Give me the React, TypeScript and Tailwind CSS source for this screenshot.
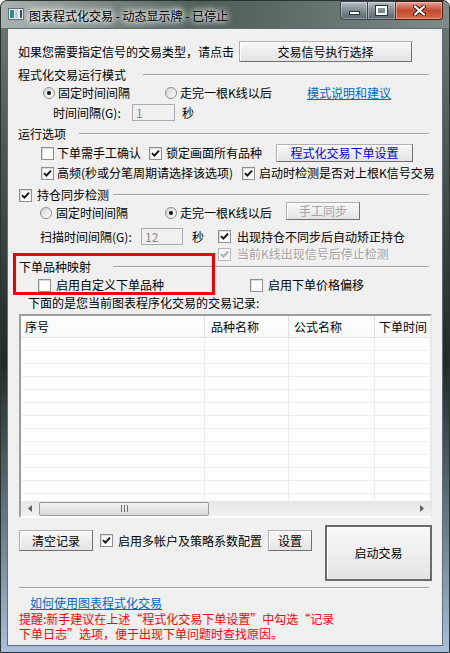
import React from 'react';

function Check({ checked = false, disabled = false }: { checked?: boolean; disabled?: boolean }) {
  return (
    <span
      className={
        disabled
          ? 'flex h-[13px] w-[13px] shrink-0 items-center justify-center border border-[#b8b8b8] bg-[#f4f4f4]'
          : 'flex h-[13px] w-[13px] shrink-0 items-center justify-center border border-[#8e8f8f] bg-white shadow-[inset_1px_1px_0_#dcdcdc]'
      }
    >
      {checked && (
        <svg width="9" height="9" viewBox="0 0 9 9">
          <path d="M1 4.2 3.4 6.6 8 1.6" fill="none" stroke={disabled ? '#a8a8a8' : '#111'} strokeWidth="1.9" />
        </svg>
      )}
    </span>
  );
}

function Radio({ on = false }: { on?: boolean }) {
  return (
    <span className="flex h-[12px] w-[12px] shrink-0 items-center justify-center rounded-full border border-[#8e8f8f] bg-gradient-to-br from-[#d4d4d4] to-white">
      {on && <span className="h-[4px] w-[4px] rounded-full bg-[#111]" />}
    </span>
  );
}

function Btn({
  children,
  className = '',
  disabled = false,
  strong = false,
}: {
  children: React.ReactNode;
  className?: string;
  disabled?: boolean;
  strong?: boolean;
}) {
  const edge = strong
    ? 'border-2 border-[#6a6a6a]'
    : 'border border-[#b0b0b0] border-r-[#707070] border-b-[#707070]';
  return (
    <div
      className={`flex shrink-0 items-center justify-center bg-gradient-to-b from-[#f8f8f8] to-[#e4e4e4] shadow-[inset_1px_1px_0_#fff] ${edge} ${disabled ? 'text-[#a3a3a3]' : ''} ${className}`}
    >
      {children}
    </div>
  );
}

const rows = Array.from({ length: 13 }, (_, i) => i);

export default function App() {
  return (
    <div className="flex h-[653px] w-[450px] flex-col overflow-hidden rounded-t-[7px] border border-[#2b3432] bg-gradient-to-b from-[#6f7b76] via-[#1f2b25] via-55% to-[#a8c0dc] font-['Noto_Sans_CJK_SC',sans-serif] text-[12px] leading-[14px] text-black">
      {/* title bar */}
      <div className="flex h-[27px] shrink-0 items-start bg-gradient-to-r from-[#aab3b0] via-[#4e5d56] via-45% to-[#7f8a89]">
        <svg className="ml-[7px] mt-[7px] shrink-0" width="16" height="12" viewBox="0 0 16 12">
          <rect x="0.5" y="0.5" width="15" height="11" fill="#e4edf6" stroke="#5e6e7c" />
          <rect x="2" y="2" width="4" height="8" fill="#2f8a86" />
          <rect x="7" y="2" width="3" height="8" fill="#b7cde3" />
          <rect x="12" y="2" width="2" height="8" fill="#3d4b58" />
        </svg>
        <span className="ml-[5px] mt-[7px] whitespace-nowrap leading-[16px] [text-shadow:0_0_5px_#fff,0_0_8px_#fff,0_0_10px_#fff]">
          图表程式化交易 - 动态显示牌 - 已停止
        </span>
        <div className="ml-auto mr-[6px] flex">
          <div className="flex h-[19px] w-[28px] items-center justify-center rounded-bl-[4px] border border-[#3a4347] bg-gradient-to-b from-[#b7c0c4] via-[#7f8b90] to-[#5b676c] shadow-[inset_0_0_0_1px_rgba(255,255,255,0.35)]">
            <span className="mt-[4px] h-[4px] w-[11px] border border-[#2e3538] bg-white" />
          </div>
          <div className="flex h-[19px] w-[28px] items-center justify-center border border-l-0 border-[#3a4347] bg-gradient-to-b from-[#b7c0c4] via-[#7f8b90] to-[#5b676c] shadow-[inset_0_0_0_1px_rgba(255,255,255,0.35)]">
            <span className="h-[9px] w-[11px] border-[2px] border-white outline outline-1 outline-[#2e3538]" />
          </div>
          <div className="flex h-[19px] w-[47px] items-center justify-center rounded-br-[4px] border border-l-0 border-[#4a1a10] bg-gradient-to-b from-[#e3a293] via-[#c24a30] to-[#d9684a] shadow-[inset_0_0_0_1px_rgba(255,255,255,0.35)]">
            <svg width="13" height="11" viewBox="0 0 13 11">
              <path d="M2 1.5 11 9.5 M11 1.5 2 9.5" stroke="#3a1a12" strokeWidth="4" strokeLinecap="round" />
              <path d="M2 1.5 11 9.5 M11 1.5 2 9.5" stroke="#fff" strokeWidth="2.2" strokeLinecap="round" />
            </svg>
          </div>
        </div>
      </div>

      {/* client area */}
      <div className="flex flex-1 px-[6px] pb-[6px]">
        <div className="relative flex flex-1 flex-col border border-[#5f6d78] bg-[#f0f0f0]">
          <div className="mt-[12px] flex h-[21px] items-center pl-[10px]">
            <span className="w-[221px] whitespace-nowrap">如果您需要指定信号的交易类型，请点击</span>
            <Btn className="h-[21px] w-[173px]">交易信号执行选择</Btn>
          </div>

          <div className="mt-[5px] flex h-[16px] items-center pl-[10px]">
            <span className="w-[125px] whitespace-nowrap">程式化交易运行模式</span>
            <div className="h-[2px] w-[286px] border-t border-b border-t-[#a0a0a0] border-b-white" />
          </div>

          <div className="mt-[2px] flex h-[16px] items-center pl-[35px]">
            <div className="flex w-[122px] items-center gap-[3px]">
              <Radio on />
              <span>固定时间间隔</span>
            </div>
            <div className="flex w-[142px] items-center gap-[3px]">
              <Radio />
              <span>走完一根K线以后</span>
            </div>
            <span className="text-[#0066cc] underline">模式说明和建议</span>
          </div>

          <div className="mt-[3px] flex h-[17px] items-center pl-[45px]">
            <span className="w-[79px] whitespace-nowrap">时间间隔(G):</span>
            <div className="flex h-[17px] w-[43px] items-center border border-[#a9abb0] bg-[#f0f0f0] pl-[3px] text-[#8a8a8a]">1</div>
            <span className="ml-[7px]">秒</span>
          </div>

          <div className="mt-[5px] flex h-[16px] items-center pl-[10px]">
            <span className="w-[61px] whitespace-nowrap">运行选项</span>
            <div className="h-[2px] w-[350px] border-t border-b border-t-[#a0a0a0] border-b-white" />
          </div>

          <div className="mt-[2px] flex h-[18px] items-center pl-[33px]">
            <div className="flex w-[108px] items-center gap-[3px]">
              <Check />
              <span className="whitespace-nowrap">下单需手工确认</span>
            </div>
            <div className="flex w-[127px] items-center gap-[4px]">
              <Check checked />
              <span className="whitespace-nowrap">锁定画面所有品种</span>
            </div>
            <Btn className="h-[18px] w-[137px] text-[#0000ee]">程式化交易下单设置</Btn>
          </div>

          <div className="mt-[3px] flex h-[16px] items-center pl-[33px]">
            <div className="flex w-[201px] items-center gap-[3px]">
              <Check checked />
              <span className="whitespace-nowrap">高频(秒或分笔周期请选择该选项)</span>
            </div>
            <div className="flex items-center gap-[4px]">
              <Check checked />
              <span className="whitespace-nowrap">启动时检测是否对上根K信号交易</span>
            </div>
          </div>

          <div className="mt-[7px] flex h-[14px] items-center pl-[11px]">
            <div className="flex w-[94px] items-center gap-[5px]">
              <Check checked />
              <span className="whitespace-nowrap">持仓同步检测</span>
            </div>
            <div className="h-[2px] w-[316px] border-t border-b border-t-[#a0a0a0] border-b-white" />
          </div>

          <div className="flex h-[18px] items-center pl-[32px]">
            <div className="flex w-[125px] items-center gap-[4px] pt-[3px]">
              <Radio />
              <span>固定时间间隔</span>
            </div>
            <div className="flex w-[121px] items-center gap-[3px] pt-[3px]">
              <Radio on />
              <span className="whitespace-nowrap">走完一根K线以后</span>
            </div>
            <Btn disabled className="h-[18px] w-[74px]">
              手工同步
            </Btn>
          </div>

          <div className="mt-[8px] flex h-[17px] items-center pl-[32px]">
            <span className="w-[101px] whitespace-nowrap">扫描时间间隔(G):</span>
            <div className="flex h-[17px] w-[42px] items-center border border-[#a9abb0] bg-[#f0f0f0] pl-[3px] text-[#8a8a8a]">12</div>
            <span className="ml-[9px] w-[26px]">秒</span>
            <div className="flex items-center gap-[6px]">
              <Check checked />
              <span className="whitespace-nowrap">出现持仓不同步后自动矫正持仓</span>
            </div>
          </div>

          <div className="mt-[3px] flex h-[12px] items-center pl-[210px]">
            <div className="flex items-center gap-[6px]">
              <Check checked disabled />
              <span className="whitespace-nowrap text-[#a0a0a0] [text-shadow:1px_1px_0_#fff]">当前K线出现信号后停止检测</span>
            </div>
          </div>

          <div className="mt-[1px] flex h-[12px] items-center pl-[11px]">
            <span className="w-[94px] whitespace-nowrap">下单品种映射</span>
            <div className="h-[2px] w-[316px] border-t border-b border-t-[#a0a0a0] border-b-white" />
          </div>

          <div className="mt-[4px] flex h-[16px] items-center pl-[30px]">
            <div className="flex w-[212px] items-center gap-[5px]">
              <Check />
              <span className="whitespace-nowrap">启用自定义下单品种</span>
            </div>
            <div className="flex items-center gap-[5px]">
              <Check />
              <span className="whitespace-nowrap">启用下单价格偏移</span>
            </div>
          </div>

          <div className="mt-[3px] flex h-[14px] items-center pl-[20px]">
            <span className="whitespace-nowrap">下面的是您当前图表程序化交易的交易记录:</span>
          </div>

          {/* record list */}
          <div className="ml-[11px] mt-[4px] flex h-[204px] w-[413px] flex-col border-2 border-t-[#9c9c9c] border-l-[#9c9c9c] border-r-[#e8e8e8] border-b-white bg-white">
            <div className="flex h-[22px] shrink-0 border-b border-[#e5e5e5] bg-gradient-to-b from-white to-[#f7f8f9]">
              <div className="flex w-[184px] items-center border-r border-[#e0e0e0] pl-[4px]">序号</div>
              <div className="flex w-[84px] items-center border-r border-[#e0e0e0] pl-[6px]">品种名称</div>
              <div className="flex w-[86px] items-center border-r border-[#e0e0e0] pl-[5px]">公式名称</div>
              <div className="flex flex-1 items-center overflow-hidden whitespace-nowrap pl-[4px]">下单时间</div>
            </div>
            <div className="h-[163px] overflow-hidden">
              {rows.map((r) => (
                <div key={r} className="flex h-[13px] border-b border-[#ededed]">
                  <div className="w-[184px] border-r border-[#ededed]" />
                  <div className="w-[84px] border-r border-[#ededed]" />
                  <div className="w-[86px] border-r border-[#ededed]" />
                  <div className="flex-1" />
                </div>
              ))}
            </div>
            <div className="flex h-[15px] shrink-0 items-center bg-gradient-to-b from-[#e6e6e6] to-[#f1f1f1]">
              <div className="flex h-[15px] w-[17px] items-center justify-center">
                <svg width="4" height="7" viewBox="0 0 4 7">
                  <path d="M4 0 0 3.5 4 7Z" fill="#606060" />
                </svg>
              </div>
              <div className="ml-[1px] flex h-[14px] w-[170px] items-center justify-center rounded-[2px] border border-[#9a9a9a] bg-gradient-to-b from-[#f4f4f4] to-[#d9d9d9]">
                <svg width="7" height="7" viewBox="0 0 7 7">
                  <path d="M0.5 0v7M3.5 0v7M6.5 0v7" stroke="#707070" strokeWidth="1" />
                </svg>
              </div>
              <div className="flex-1" />
              <div className="flex h-[15px] w-[17px] items-center justify-center">
                <svg width="4" height="7" viewBox="0 0 4 7">
                  <path d="M0 0 4 3.5 0 7Z" fill="#606060" />
                </svg>
              </div>
            </div>
          </div>

          <div className="mt-[7px] flex h-[56px] items-start pl-[11px]">
            <div className="mt-[5px] flex h-[21px] items-center">
              <Btn className="h-[21px] w-[74px]">清空记录</Btn>
              <div className="ml-[7px] flex w-[168px] items-center gap-[5px]">
                <Check checked />
                <span className="whitespace-nowrap">启用多帐户及策略系数配置</span>
              </div>
              <Btn className="h-[21px] w-[44px]">设置</Btn>
            </div>
            <Btn strong className="ml-[13px] h-[56px] w-[107px]">
              启动交易
            </Btn>
          </div>

          <div className="ml-[11px] mt-[6px] h-[2px] w-[410px] border-t border-b border-t-[#a0a0a0] border-b-white" />

          <div className="mt-[7px] flex h-[14px] items-center pl-[22px]">
            <span className="text-[#0066cc] underline">如何使用图表程式化交易</span>
          </div>

          <div className="mt-[1px] pl-[11px] leading-[15px] text-[#ff0000]">
            <div className="whitespace-nowrap">提醒:新手建议在上述“程式化交易下单设置”中勾选“记录</div>
            <div className="whitespace-nowrap">下单日志”选项，便于出现下单问题时查找原因。</div>
          </div>

          {/* red annotation box */}
          <div className="pointer-events-none absolute left-[5px] top-[224px] h-[42px] w-[202px] border-[3px] border-[#f20000]" />
        </div>
      </div>
    </div>
  );
}
